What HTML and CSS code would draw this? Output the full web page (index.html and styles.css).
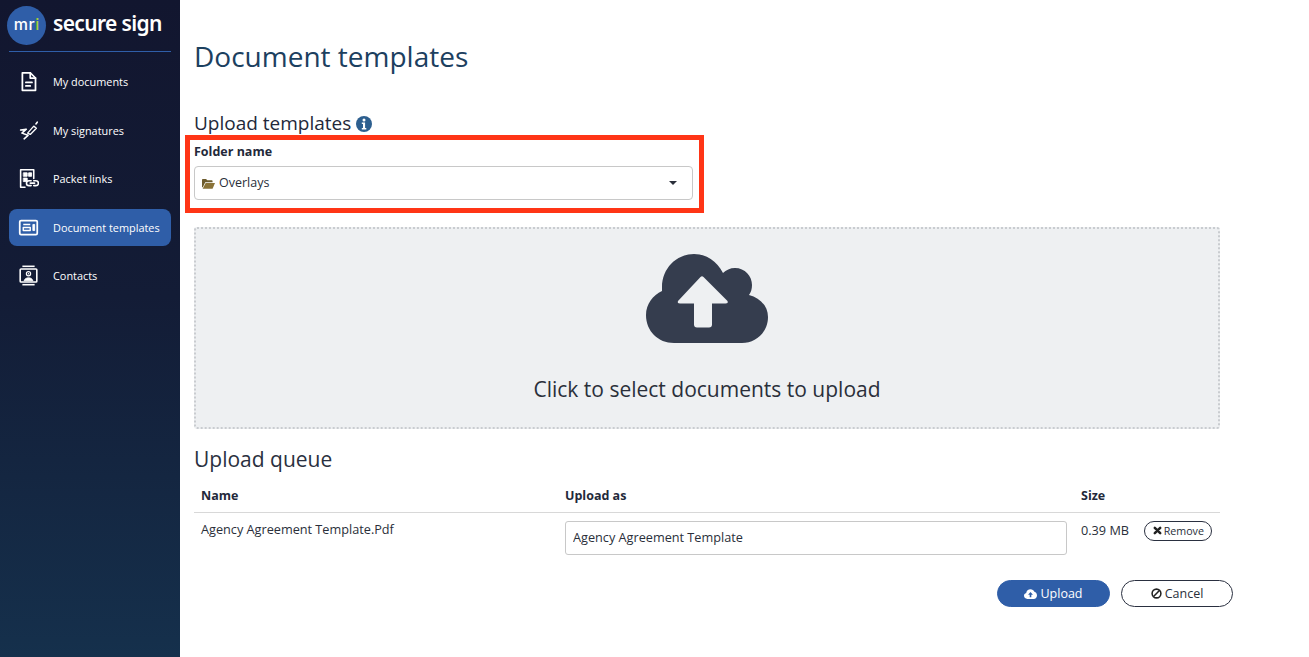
FILE: index.html
```html
<!DOCTYPE html>
<html lang="en">
<head>
<meta charset="utf-8">
<title>Document templates</title>
<link rel="stylesheet" href="styles.css">
</head>
<body>
<div class="app">
  <aside class="sidebar">
    <div class="brand">
      <div class="logo"><span>m</span><span>r</span><span class="logo-i">i</span></div>
      <div class="brand-name">secure sign</div>
    </div>
    <nav class="nav">
      <a class="nav-item">
        <svg class="nav-icon" viewBox="0 0 24 24" fill="none" stroke="#fff" stroke-width="2" stroke-linejoin="round" stroke-linecap="round"><path d="M5 2h9l6 6v14H5z"/><path d="M14 2v6h6"/><path d="M9 13h7M9 17h5"/></svg>
        <span>My documents</span>
      </a>
      <a class="nav-item">
        <svg class="nav-icon" viewBox="0 0 24 24" fill="none" stroke="#fff" stroke-width="1.800" stroke-linejoin="round" stroke-linecap="round"><path d="M3 11.500l6.500-1L4.500 15l7 2.500-4.500 4"/><path d="M11 15l7-8 3 2.500-7 7z" stroke-width="1.500"/><path d="M20.500 4.500l1.500-2"/></svg>
        <span>My signatures</span>
      </a>
      <a class="nav-item">
        <svg class="nav-icon" viewBox="0 0 24 24" fill="none" stroke="#fff" stroke-width="1.800" stroke-linejoin="round" stroke-linecap="round"><path d="M8 22H3V2h15v10"/><path d="M6.500 5.500h4v4h-4zM12.500 5.500h3v4h-3zM6.500 11.500h4v4h-4z" fill="#fff" stroke-width="1"/><path d="M15 14.500h-2.500a2.800 2.800 0 0 0 0 5.600H15M18 14.500h2.500a2.800 2.800 0 0 1 0 5.600H18M14 17.300h5" stroke-width="1.800"/></svg>
        <span>Packet links</span>
      </a>
      <a class="nav-item active">
        <svg class="nav-icon" viewBox="0 0 24 24" fill="none" stroke="#fff" stroke-width="2" stroke-linejoin="round"><rect x="2" y="4" width="20" height="16" rx="1.500"/><path d="M6 8.500h8M6 12h8v3.500H6z" stroke-width="1.600"/><path d="M17 8.500h2v7h-2z" fill="#fff" stroke-width="1"/></svg>
        <span>Document templates</span>
      </a>
      <a class="nav-item">
        <svg class="nav-icon" viewBox="0 0 24 24" fill="none" stroke="#fff" stroke-width="1.800" stroke-linejoin="round"><path d="M5 1.500h14"/><rect x="2.500" y="4.500" width="19" height="15" rx="1"/><circle cx="12" cy="10" r="2.400" stroke-width="1.400"/><circle cx="12" cy="10" r=".8" fill="#fff" stroke="none"/><path d="M7 18c1-4.500 9-4.500 10 0z" fill="#fff" stroke-width="1"/><path d="M5 22.500h14"/></svg>
        <span>Contacts</span>
      </a>
    </nav>
  </aside>

  <main class="main">
    <h1 class="title">Document templates</h1>

    <h2 class="section-title">Upload templates
      <svg class="info-icon" viewBox="0 0 16 16"><circle cx="8" cy="8" r="8" fill="#2d5f8f"/><circle cx="8" cy="4" r="1.500" fill="#fff"/><path d="M5.800 6.500h3.300v5.500h1.200v1.500H5.800V12H7V8H5.800z" fill="#fff"/></svg>
    </h2>

    <div class="folder-block">
      <label class="field-label">Folder name</label>
      <div class="select">
        <svg class="folder-icon" viewBox="0 0 16 13"><path d="M0 2a1 1 0 0 1 1-1h4l1.500 1.500H12a1 1 0 0 1 1 1V5H4L1 11H0z" fill="#6d5c2e"/><path d="M4.500 6H16l-3 7H0.800z" fill="#8a7338"/></svg>
        <span class="select-text">Overlays</span>
        <span class="caret"></span>
      </div>
      <div class="highlight"></div>
    </div>

    <div class="dropzone">
      <svg class="cloud" viewBox="0 0 122 90"><path d="M28 89C12 89 0 77 0 61C0 50 7 41 16 37L16 33C16 15 30 0 48 0C60 0 71 7 77 19C80 16 84 14 89 14C99 14 106 22 106 31C106 35 105 38 103 41C114 44 122 52 122 63C122 78 110 89 96 89Z" fill="#353d4e"/><path d="M54.500 23q1.500-1.500 3 0l24 24q1 2.500-2 2.500H66v21q0 3-3 3H51q-3 0-3-3V49.500H34q-3 0-2-2.500z" fill="#eef0f2"/></svg>
      <div class="drop-text">Click to select documents to upload</div>
    </div>

    <h2 class="queue-title">Upload queue</h2>
    <table class="queue">
      <thead>
        <tr>
          <th class="col-name">Name</th>
          <th class="col-as">Upload as</th>
          <th>Size</th>
        </tr>
      </thead>
      <tbody>
        <tr>
          <td class="col-name">Agency Agreement Template.Pdf</td>
          <td class="col-as"><input class="text-input" type="text" value="Agency Agreement Template"></td>
          <td class="size-cell"><span>0.39 MB</span>
            <button class="remove-btn"><svg class="x-icon" viewBox="0 0 10 10"><path d="M2 2l6 6M8 2l-6 6" stroke="#222" stroke-width="2.800" stroke-linecap="round"/></svg>Remove</button>
          </td>
        </tr>
      </tbody>
    </table>

    <div class="actions">
      <button class="btn btn-primary"><svg class="btn-icon" viewBox="0 0 16 12"><path d="M4 12C2 12 0 10.500 0 8.300 0 6.500 1 5.300 2.700 4.800 3 2 5.200 0 8 0c2.200 0 4 1.200 4.800 3.200C14.700 3.800 16 5.500 16 7.700 16 10 14.200 12 12 12z" fill="#fff"/><path d="M8 3.500L11 7H9v3H7V7H5z" fill="#2f5ea8"/></svg>Upload</button>
      <button class="btn btn-outline"><svg class="btn-icon ban" viewBox="0 0 12 12" fill="none" stroke="#222" stroke-width="1.700"><circle cx="6" cy="6" r="4.800"/><path d="M2.800 9.200l6.400-6.400"/></svg>Cancel</button>
    </div>
  </main>
</div>
</body>
</html>
```
FILE: styles.css
```css
* { box-sizing: border-box; }
html, body { margin: 0; height: 100%; }
body { font-family: "Open Sans", "Noto Sans", sans-serif; color: #2a2f3a; background: #fff; overflow: hidden; }
.app { display: flex; height: 657px; }

.sidebar { width: 180px; flex: none; padding: 5px 9px 0; background: linear-gradient(180deg, #12162f 0%, #131c36 45%, #15304c 100%); color: #fff; }
.brand { display: flex; align-items: center; gap: 7px; height: 46px; margin-left: -2px; padding-bottom: 6px; }
.logo { width: 39px; height: 39px; flex: none; border-radius: 50%; background: #2f5ea8; display: flex; align-items: center; justify-content: center; gap: 0.500px; font-size: 16px; font-weight: 500; line-height: 1; color: #fff; font-family: "Inter", sans-serif; padding-bottom: 2px; }
.logo-i { color: #a6ce39; }
.brand-name { font-size: 21px; font-weight: 600; letter-spacing: -0.650px; line-height: 1; padding-bottom: 4px; font-family: "Noto Sans", sans-serif; }
.nav { border-top: 1px solid #2f5ea8; display: flex; flex-direction: column; gap: 11.600px; padding-top: 11px; }
.nav-item { display: flex; align-items: center; height: 37px; padding-left: 9px; gap: 14px; border-radius: 8px; font-size: 10.900px; font-weight: 500; color: #fff; }
.nav-item.active { background: #2f5ea8; }
.nav-icon { width: 21px; height: 21px; flex: none; }

.main { flex: 1; padding: 0 89px 0 14px; position: relative; }
.title { margin: 0; padding-top: 38px; font-size: 28px; font-weight: 400; line-height: 36px; color: #1c405f; }
.section-title { margin: 0 0 6px; padding-top: 37px; font-size: 19px; font-weight: 400; line-height: 25px; color: #23293a; display: flex; align-items: center; gap: 5px; }
.info-icon { width: 16px; height: 16px; }
.folder-block { position: relative; width: 499px; }
.field-label { display: block; font-size: 12.500px; font-weight: 700; line-height: 20px; color: #23293a; }
.select { margin-top: 4px; height: 34px; border: 1px solid #c8c8c8; border-radius: 4px; display: flex; align-items: center; padding: 0 15px 0 7px; font-size: 12.500px; gap: 4px; color: #2a2f3a; }
.select-text { margin-top: -2px; }
.folder-icon { width: 13px; height: 11px; }
.caret { margin-left: auto; width: 0; height: 0; border-left: 4px solid transparent; border-right: 4px solid transparent; border-top: 4px solid #2a2f3a; }
.highlight { position: absolute; left: -9px; top: -7px; width: 519px; height: 78px; border: 5px solid #ff3516; pointer-events: none; }

.dropzone { margin-top: 27px; height: 202px; background: #eef0f2; border: 2px dotted #c9ccd0; border-radius: 3px; display: flex; flex-direction: column; align-items: center; padding-top: 25px; }
.cloud { width: 122px; height: 90px; margin-left: -1px; }
.drop-text { margin-top: 31px; font-size: 21px; line-height: 28px; color: #2a2f3a; }

.queue-title { margin: 16px 0 0; font-size: 21px; font-weight: 400; line-height: 28px; color: #2a3040; }
.queue { width: 100%; border-collapse: collapse; margin-top: 4px; font-size: 12.700px; table-layout: fixed; }
.queue th { text-align: left; font-weight: 700; font-size: 12.500px; height: 35px; padding: 2px 0 0; border-bottom: 1px solid #d8d8d8; color: #23293a; }
.queue td { vertical-align: top; padding: 7px 0 0; height: 52px; }
.queue td.col-as, .queue td.size-cell { padding-top: 8px; }
.col-name { width: 371px; padding-left: 7px !important; }
.col-as { width: 516px; }
.text-input { display: block; width: 502px; height: 34px; border: 1px solid #c8c8c8; border-radius: 3px; padding: 0 7px 2px; font: inherit; font-size: 12.700px; color: #2a2f3a; }
.size-cell { white-space: nowrap; }
.remove-btn { margin-left: 12px; height: 20px; width: 68px; padding: 0; justify-content: center; border: 1px solid #2a3040; border-radius: 10px; background: #fff; font: inherit; font-size: 10.700px; color: #2a2f3a; display: inline-flex; align-items: center; gap: 2px; vertical-align: top; }
.x-icon { width: 9px; height: 9px; }
.actions { display: flex; justify-content: flex-end; gap: 11px; margin-top: 16px; margin-right: -13px; }
.btn { width: 113px; height: 27px; border-radius: 14px; font: inherit; font-size: 12.500px; display: flex; align-items: center; justify-content: center; gap: 3px; padding: 0; }
.btn-primary { background: #2f5ea8; border: 1px solid #2f5ea8; color: #fff; font-weight: 500; }
.btn-outline { width: 112px; background: #fff; border: 1px solid #2a3040; color: #2a2f3a; }
.btn-icon { width: 13px; height: 10px; }
.btn-icon.ban { width: 11px; height: 11px; }
```
